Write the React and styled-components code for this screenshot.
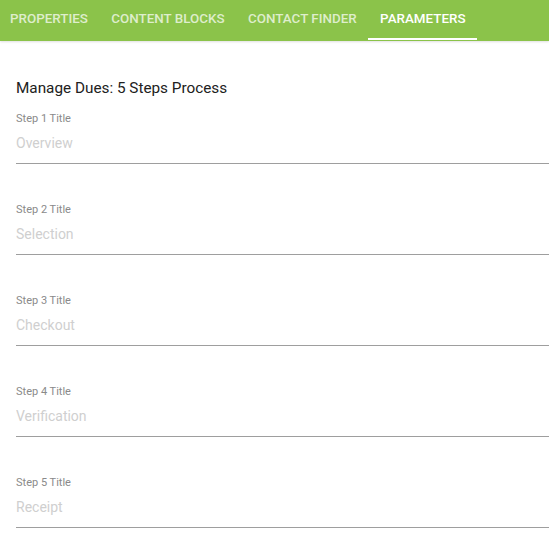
import React from "react";
import styled, { createGlobalStyle } from "styled-components";

const Global = createGlobalStyle`
  html, body { margin: 0; padding: 0; background: #fff; }
  body { font-family: Roboto, "Noto Sans", Arial, sans-serif; }
  * { box-sizing: border-box; }
`;

const TabBar = styled.nav`
  display: flex;
  height: 41px;
  background: #8bc34a;
  box-shadow: 0 1px 2px rgba(0, 0, 0, 0.12);
`;

const Tab = styled.div`
  position: relative;
  display: flex;
  align-items: center;
  padding: 0 11.7px 5px;
  margin-left: ${(p) => (p.$first ? "-1.7px" : "0")};
  font-size: 13.4px;
  font-weight: 500;
  text-transform: uppercase;
  color: ${(p) => (p.$active ? "#ffffff" : "rgba(255,255,255,0.72)")};
  &::after {
    content: "";
    position: absolute;
    left: 0;
    right: 0;
    bottom: 1px;
    height: 2px;
    background: ${(p) => (p.$active ? "#ffffff" : "transparent")};
  }
`;

const Content = styled.main`
  padding: 37px 0 0 16px;
`;

const Heading = styled.h1`
  margin: 0 0 14px;
  font-size: 15.3px;
  line-height: 20px;
  font-weight: 400;
  color: #212121;
`;

const Field = styled.div`
  display: flex;
  flex-direction: column;
  margin-bottom: 39px;
`;

const Label = styled.label`
  font-size: 11px;
  line-height: 14px;
  color: #8a8a8a;
`;

const Input = styled.input`
  border: none;
  border-bottom: 1px solid #9e9e9e;
  outline: none;
  padding: 9px 0 12px;
  font-family: inherit;
  font-size: 14px;
  line-height: 16px;
  color: #333;
  background: transparent;
  &::placeholder { color: #cfcfcf; }
`;

const tabs = ["Properties", "Content Blocks", "Contact Finder", "Parameters"];
const steps = ["Overview", "Selection", "Checkout", "Verification", "Receipt"];

export default function App() {
  return (
    <>
      <Global />
      <TabBar>
        {tabs.map((t, i) => (
          <Tab key={t} $first={i === 0} $active={i === 3}>{t}</Tab>
        ))}
      </TabBar>
      <Content>
        <Heading>Manage Dues: 5 Steps Process</Heading>
        {steps.map((s, i) => (
          <Field key={s}>
            <Label>Step {i + 1} Title</Label>
            <Input placeholder={s} />
          </Field>
        ))}
      </Content>
    </>
  );
}
